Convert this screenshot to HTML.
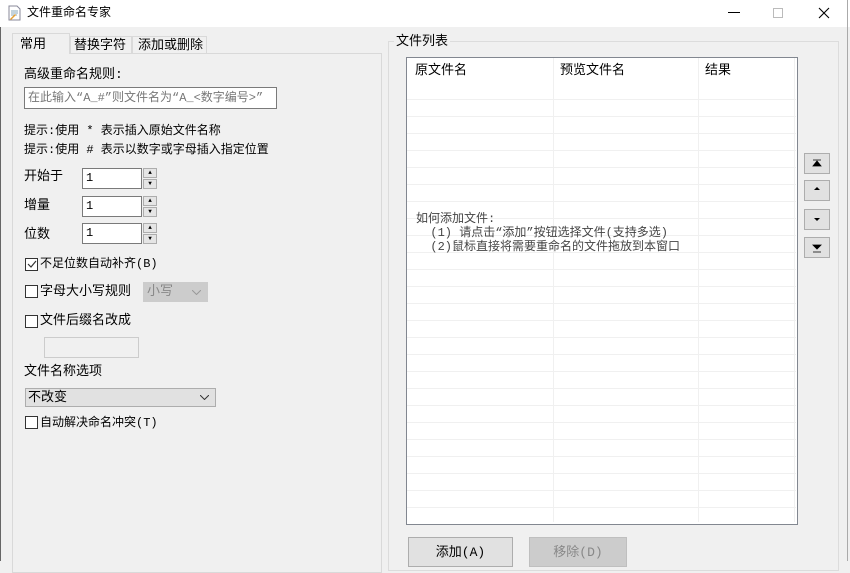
<!DOCTYPE html>
<html><head><meta charset="utf-8"><style>
*{box-sizing:border-box;margin:0;padding:0}
body{width:850px;height:561px;overflow:hidden;background:#f0f0f0;font-family:"Liberation Mono","Noto Sans CJK SC",sans-serif;font-size:12px;color:#000;position:relative;line-height:1.35}
.a{position:absolute;white-space:nowrap}
.title{left:0;top:0;width:850px;height:27px;background:#fff}
.inp{background:#fff;border:1px solid #7a7a7a}
.spin{width:14px;height:10px;border:1px solid #adadad;background:#e5e5e5;font-size:6px;text-align:center;line-height:8px}
.cb{width:13px;height:13px;border:1px solid #333;background:#fff}
.btn{border:1px solid #adadad;background:#e1e1e1;text-align:center}
.hl{height:1px;background:#f0f0f0;left:407px;width:389px}
</style></head><body>
<div class="a title"></div>
<div class="a" style="left:847px;top:0;width:1px;height:561px;background:#aaa"></div>
<div class="a" style="left:0;top:27px;width:1px;height:534px;background:#666"></div>
<svg class="a" style="left:6px;top:5px" width="16" height="16"><path d="M3 1h8l3 3v11H3z" fill="#fff" stroke="#889"/><path d="M5 6h7M5 8h7M5 10h6" stroke="#8ab"/><path d="M4 14l5-5 1 1-5 5z" fill="#e8a030"/></svg>
<div class="a" style="left:27px;top:5px;font-size:12px">文件重命名专家</div>
<div class="a" style="left:728px;top:12px;width:12px;height:1px;background:#000"></div>
<div class="a" style="left:773px;top:8px;width:10px;height:10px;border:1px solid #bbb"></div>
<svg class="a" style="left:818px;top:7px" width="12" height="12"><path d="M1 1L11 11M11 1L1 11" stroke="#000" stroke-width="1.1"/></svg>

<div class="a" style="left:12px;top:53px;width:370px;height:520px;border:1px solid #d9d9d9;background:#f0f0f0"></div>
<div class="a" style="left:12px;top:33px;width:58px;height:21px;background:#f0f0f0;border:1px solid #d9d9d9;border-bottom:none"></div>
<div class="a" style="left:20px;top:36px;font-size:13px">常用</div>
<div class="a" style="left:70px;top:36px;width:62px;height:18px;border:1px solid #d9d9d9;background:#f0f0f0"></div>
<div class="a" style="left:74px;top:37px;font-size:13px">替换字符</div>
<div class="a" style="left:132px;top:36px;width:75px;height:18px;border:1px solid #d9d9d9;background:#f0f0f0"></div>
<div class="a" style="left:138px;top:37px;font-size:13px">添加或删除</div>

<div class="a" style="left:24px;top:66px;font-size:13px">高级重命名规则:</div>
<div class="a inp" style="left:24px;top:87px;width:253px;height:22px;color:#777;font-size:12px;padding:2px 0 0 3px">在此输入“A_#”则文件名为“A_&lt;数字编号&gt;”</div>
<div class="a" style="left:24px;top:123px;font-size:12px">提示:使用 * 表示插入原始文件名称</div>
<div class="a" style="left:24px;top:142px;font-size:12px">提示:使用 # 表示以数字或字母插入指定位置</div>

<div class="a" style="left:24px;top:168px;font-size:13px">开始于</div>
<div class="a inp" style="left:82px;top:168px;width:60px;height:21px;padding:1px 3px">1</div>
<div class="a spin" style="left:143px;top:168px">▲</div><div class="a spin" style="left:143px;top:179px">▼</div>
<div class="a" style="left:24px;top:197px;font-size:13px">增量</div>
<div class="a inp" style="left:82px;top:196px;width:60px;height:21px;padding:1px 3px">1</div>
<div class="a spin" style="left:143px;top:196px">▲</div><div class="a spin" style="left:143px;top:207px">▼</div>
<div class="a" style="left:24px;top:226px;font-size:13px">位数</div>
<div class="a inp" style="left:82px;top:223px;width:60px;height:21px;padding:1px 3px">1</div>
<div class="a spin" style="left:143px;top:223px">▲</div><div class="a spin" style="left:143px;top:234px">▼</div>

<div class="a cb" style="left:25px;top:258px"></div>
<svg class="a" style="left:26px;top:259px" width="11" height="11"><path d="M2 5l3 3 5-6" stroke="#333" fill="none" stroke-width="1.2"/></svg>
<div class="a" style="left:40px;top:256px;font-size:12px">不足位数自动补齐(B)</div>
<div class="a cb" style="left:25px;top:285px"></div>
<div class="a" style="left:40px;top:283px;font-size:13px">字母大小写规则</div>
<div class="a" style="left:143px;top:282px;width:65px;height:20px;border:1px solid #ccc;background:#ccc;color:#888;font-size:13px;padding:0 3px">小写<svg style="position:absolute;right:6px;top:7px" width="9" height="5"><path d="M0 0l4.5 4.5L9 0" stroke="#999" fill="none"/></svg></div>
<div class="a cb" style="left:25px;top:315px"></div>
<div class="a" style="left:40px;top:312px;font-size:13px">文件后缀名改成</div>
<div class="a" style="left:44px;top:337px;width:95px;height:21px;border:1px solid #ccc;background:#f0f0f0"></div>
<div class="a" style="left:24px;top:363px;font-size:13px">文件名称选项</div>
<div class="a" style="left:25px;top:388px;width:191px;height:19px;border:1px solid #adadad;background:#e1e1e1;font-size:13px;padding:0 2px;line-height:17px">不改变<svg style="position:absolute;right:6px;top:6px" width="9" height="5"><path d="M0 0l4.5 4.5L9 0" stroke="#333" fill="none"/></svg></div>
<div class="a cb" style="left:25px;top:416px"></div>
<div class="a" style="left:40px;top:415px;font-size:12px">自动解决命名冲突(T)</div>

<div class="a" style="left:388px;top:41px;width:451px;height:530px;border:1px solid #dcdcdc"></div>
<div class="a" style="left:394px;top:33px;background:#f0f0f0;padding:0 2px;font-size:13px">文件列表</div>
<div class="a" style="left:406px;top:57px;width:392px;height:468px;border:1px solid #828790;background:#fff"></div>
<div class="a" style="left:415px;top:62px;font-size:13px">原文件名</div>
<div class="a" style="left:560px;top:62px;font-size:13px">预览文件名</div>
<div class="a" style="left:705px;top:62px;font-size:13px">结果</div>
<div class="a" style="left:553px;top:58px;width:1px;height:464px;background:#f0f0f0"></div>
<div class="a" style="left:698px;top:58px;width:1px;height:464px;background:#f0f0f0"></div>
<div class="a" style="left:794px;top:58px;width:1px;height:464px;background:#f0f0f0"></div>
<div class="a hl" style="top:99px"></div><div class="a hl" style="top:116px"></div><div class="a hl" style="top:133px"></div><div class="a hl" style="top:150px"></div><div class="a hl" style="top:167px"></div><div class="a hl" style="top:184px"></div><div class="a hl" style="top:201px"></div><div class="a hl" style="top:218px"></div><div class="a hl" style="top:235px"></div><div class="a hl" style="top:252px"></div><div class="a hl" style="top:269px"></div><div class="a hl" style="top:286px"></div><div class="a hl" style="top:303px"></div><div class="a hl" style="top:320px"></div><div class="a hl" style="top:337px"></div><div class="a hl" style="top:354px"></div><div class="a hl" style="top:371px"></div><div class="a hl" style="top:388px"></div><div class="a hl" style="top:405px"></div><div class="a hl" style="top:422px"></div><div class="a hl" style="top:439px"></div><div class="a hl" style="top:456px"></div><div class="a hl" style="top:473px"></div><div class="a hl" style="top:490px"></div><div class="a hl" style="top:507px"></div>
<div class="a" style="left:416px;top:212px;font-size:12px;color:#444;line-height:14px">如何添加文件:<br>&nbsp;&nbsp;(1) 请点击“添加”按钮选择文件(支持多选)<br>&nbsp;&nbsp;(2)鼠标直接将需要重命名的文件拖放到本窗口</div>

<div class="a btn" style="left:804px;top:153px;width:26px;height:21px"></div>
<div class="a btn" style="left:804px;top:180px;width:26px;height:21px"></div>
<div class="a btn" style="left:804px;top:209px;width:26px;height:21px"></div>
<div class="a btn" style="left:804px;top:237px;width:26px;height:21px"></div>
<svg class="a" style="left:804px;top:153px" width="26" height="110"><path d="M9 7h8M13 8l-4 5h8z" stroke="#000" fill="#000" stroke-width=".8"/><path d="M13 34l-3 3h6z" fill="#000"/><path d="M10 65h6l-3 3z" fill="#000"/><path d="M9 92h8l-4 4zM9 99h8" stroke="#000" fill="#000" stroke-width=".8"/></svg>

<div class="a btn" style="left:408px;top:537px;width:105px;height:30px;font-size:13px;padding-top:6px">添加(A)</div>
<div class="a btn" style="left:529px;top:537px;width:98px;height:30px;font-size:13px;padding-top:6px;background:#ccc;color:#888;border-color:#bfbfbf">移除(D)</div>
</body></html>
